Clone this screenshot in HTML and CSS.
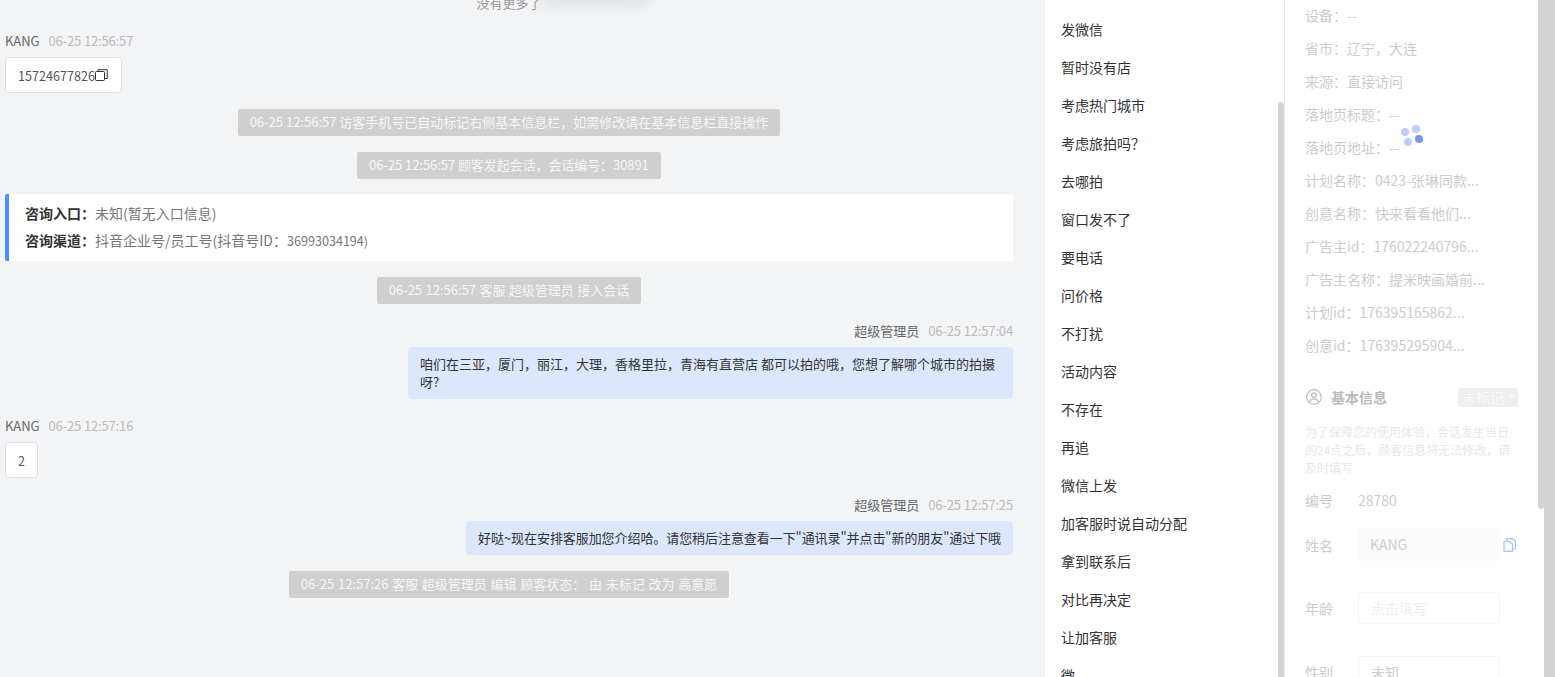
FILE: index.html
```html
<!DOCTYPE html>
<html lang="zh-CN">
<head>
<meta charset="utf-8">
<title>会话</title>
<link rel="stylesheet" href="styles.css">
</head>
<body>
<div class="app">
  <main class="chat">
    <div class="toast-shadow"></div>
    <div class="no-more">没有更多了</div>

    <div class="meta meta-first"><span class="who">KANG</span><span class="when">06-25 12:56:57</span></div>
    <div class="bubble-in">15724677826<svg class="copy" viewBox="0 0 13 13" width="13" height="13"><rect x="0.5" y="2.5" width="9" height="9" rx="1" fill="none" stroke="#333" stroke-width="1"/><path d="M3 2.5V0.7H12.2V9.5H9.5" fill="none" stroke="#333" stroke-width="1"/></svg></div>

    <div class="sys sys-a"><span>06-25 12:56:57 访客手机号已自动标记右侧基本信息栏，如需修改请在基本信息栏直接操作</span></div>
    <div class="sys sys-b"><span>06-25 12:56:57 顾客发起会话，会话编号：30891</span></div>

    <section class="entry">
      <p><b>咨询入口：</b>未知(暂无入口信息)</p>
      <p><b>咨询渠道：</b>抖音企业号/员工号(抖音号ID：<span class="num">36993034194)</span></p>
    </section>

    <div class="sys sys-c"><span>06-25 12:56:57 客服 超级管理员 接入会话</span></div>

    <div class="meta meta-right meta-d"><span class="who">超级管理员</span><span class="when">06-25 12:57:04</span></div>
    <div class="bubble-out bubble-wide">咱们在三亚，厦门，丽江，大理，香格里拉，青海有直营店 都可以拍的哦，您想了解哪个城市的拍摄呀?</div>

    <div class="meta meta-e"><span class="who">KANG</span><span class="when">06-25 12:57:16</span></div>
    <div class="bubble-in">2</div>

    <div class="meta meta-right meta-f"><span class="who">超级管理员</span><span class="when">06-25 12:57:25</span></div>
    <div class="bubble-out bubble-line">好哒~现在安排客服加您介绍哈。请您稍后注意查看一下"通讯录"并点击"新的朋友"通过下哦</div>

    <div class="sys sys-d"><span>06-25 12:57:26 客服 超级管理员 编辑 顾客状态： 由 未标记 改为 高意愿</span></div>
  </main>

  <nav class="phrases">
    <ul>
      <li>发微信</li>
      <li>暂时没有店</li>
      <li>考虑热门城市</li>
      <li>考虑旅拍吗？</li>
      <li>去哪拍</li>
      <li>窗口发不了</li>
      <li>要电话</li>
      <li>问价格</li>
      <li>不打扰</li>
      <li>活动内容</li>
      <li>不存在</li>
      <li>再追</li>
      <li>微信上发</li>
      <li>加客服时说自动分配</li>
      <li>拿到联系后</li>
      <li>对比再决定</li>
      <li>让加客服</li>
      <li>微</li>
    </ul>
    <div class="thumb thumb-list"></div>
  </nav>

  <aside class="info">
    <div class="info-body">
      <ul class="facts">
        <li>设备：<span class="dash">--</span></li>
        <li>省市：辽宁，大连</li>
        <li>来源：直接访问</li>
        <li>落地页标题：<span class="dash">--</span></li>
        <li>落地页地址：<span class="dash">--</span></li>
        <li>计划名称：0423-张琳同款...</li>
        <li>创意名称：快来看看他们...</li>
        <li>广告主id：176022240796...</li>
        <li>广告主名称：提米映画婚前...</li>
        <li>计划id：176395165862...</li>
        <li>创意id：176395295904...</li>
      </ul>
      <div class="section-head">
        <svg class="user-icon" viewBox="0 0 16 16" width="16" height="16"><circle cx="8" cy="8" r="7.3" fill="none" stroke="#bdbdbd" stroke-width="1.2"/><circle cx="8" cy="6.3" r="2.4" fill="none" stroke="#bdbdbd" stroke-width="1.2"/><path d="M3.6 13.2C4.2 11 6 10.2 8 10.2s3.8.8 4.4 3" fill="none" stroke="#bdbdbd" stroke-width="1.2"/></svg>
        <h3>基本信息</h3>
        <div class="badge">未标记<i class="caret"></i></div>
      </div>
      <p class="notice">为了保障您的使用体验，会话发生当日的24点之后，顾客信息将无法修改，请及时填写</p>
      <div class="field field-id"><label>编号</label><span class="value">28780</span></div>
      <div class="field field-name"><label>姓名</label><div class="input input-filled">KANG</div>
        <svg class="doc-icon" viewBox="0 0 13 14" width="13" height="14"><path d="M1 3.5H6.5L9.5 6V13.4H1Z" fill="#f6f9ff" stroke="#a9c4fb" stroke-width="1.2"/><path d="M4 3.2V.7H9.5L12.4 3.2V11H9.7" fill="none" stroke="#a9c4fb" stroke-width="1.2"/></svg>
      </div>
      <div class="field field-age"><label>年龄</label><div class="input input-empty">点击填写</div></div>
      <div class="field field-sex"><label>性别</label><div class="input input-value">未知</div></div>
    </div>
    <div class="thumb thumb-info"></div>
    <div class="spinner"><i class="dot d1"></i><i class="dot d2"></i><i class="dot d3"></i><i class="dot d4"></i></div>
  </aside>

  <div class="edge"></div>
</div>
</body>
</html>
```
FILE: styles.css
```css
* { box-sizing: border-box; }
html, body { margin: 0; height: 100%; overflow: hidden; }
body {
  font-family: "Noto Sans CJK SC", "Noto Sans", sans-serif;
  font-size: 13px;
  color: #333;
  background: #fff;
}
ul { list-style: none; margin: 0; padding: 0; }
p, h3 { margin: 0; }

.app { display: flex; height: 677px; overflow: hidden; }

/* chat */
.chat {
  position: relative;
  flex: 0 0 1044px;
  height: 677px;
  padding: 0 31px 0 5px;
  background: #f3f4f6;
  overflow: hidden;
}
.toast-shadow {
  position: absolute;
  left: 545px;
  top: -26px;
  width: 100px;
  height: 26px;
  border-radius: 6px;
  box-shadow: 0 2px 14px 6px rgba(0, 0, 0, .07);
}
.no-more {
  height: 18px;
  margin-top: -6px;
  line-height: 18px;
  text-align: center;
  font-size: 13px;
  color: #999;
}
.meta { display: flex; gap: 9px; height: 18px; line-height: 18px; font-size: 13px; }
.meta-right { justify-content: flex-end; }
.who { color: #666; }
.when { color: #bbb; letter-spacing: -.15px; }
.meta-first { margin-top: 20px; }
.meta-d { margin-top: 18px; }
.meta-e { margin-top: 18px; }
.meta-f { margin-top: 18px; }

.bubble-in {
  display: flex;
  align-items: center;
  width: fit-content;
  height: 36px;
  margin-top: 7px;
  padding: 0 12px;
  background: #fff;
  border: 1px solid #dcdfe6;
  border-radius: 4px;
  font-size: 12.6px;
  color: #555;
}
.copy { flex: none; margin-right: 1px; }

.sys { display: flex; justify-content: center; }
.sys span {
  height: 27px;
  padding: 0 12px;
  line-height: 26px;
  background: #cfcfcf;
  border-radius: 2px;
  font-size: 13px;
  color: #f6f6f6;
  white-space: nowrap;
}
.sys-a { margin-top: 16px; }
.sys-b { margin-top: 16px; letter-spacing: -.07px; }
.sys-c { margin-top: 16px; word-spacing: .5px; }
.sys-d { margin-top: 16px; word-spacing: .8px; }

.entry {
  height: 67px;
  margin-top: 15px;
  padding: 6px 16px 0;
  background: #fff;
  border-left: 4px solid #4e8dff;
  border-radius: 2px;
  color: #777;
  font-size: 14px;
}
.entry p { height: 27px; line-height: 27px; white-space: nowrap; }
.entry b { color: #333; font-weight: 700; }
.num { font-size: 12.6px; }

.bubble-out {
  margin-top: 7px;
  margin-left: auto;
  padding: 8px 12px;
  line-height: 18px;
  background: #dbe7fd;
  border-radius: 4px;
  font-size: 13px;
  color: #333;
}
.bubble-wide { width: 605px; height: 52px; }
.bubble-line { width: fit-content; height: 34px; white-space: nowrap; letter-spacing: -.07px; }

/* phrase list */
.phrases {
  flex: 0 0 241px;
  display: flex;
  height: 677px;
  background: #fff;
  border-left: 1px solid #eceef1;
  border-right: 1px solid #e8e8e8;
}
.phrases ul { flex: 1; padding: 10px 0 0 16px; font-size: 14px; color: #333; }
.phrases li { height: 38px; line-height: 38px; }
.thumb { flex: none; width: 6px; background: #d3d3d3; border-radius: 3px 3px 0 0; }
.thumb-list { margin-top: 102px; }

/* info panel */
.info {
  position: relative;
  flex: 0 0 259px;
  display: flex;
  height: 677px;
  background: #fff;
}
.info-body { flex: 1; padding: 0 20px; overflow: hidden; font-size: 14px; color: #ccc; }
.facts { margin-top: -1px; }
.facts li { height: 33px; line-height: 33px; white-space: nowrap; }
.dash { letter-spacing: 1px; font-size: 13px; }
.section-head { display: flex; align-items: center; height: 20px; margin-top: 25px; }
.user-icon { flex: none; margin-left: 1px; }
.section-head h3 { margin-left: 9px; font-size: 14px; font-weight: 700; color: #bbb; }
.badge {
  display: flex;
  align-items: center;
  height: 19px;
  width: 60px;
  margin-left: auto;
  padding-left: 4px;
  background: #eeeeee;
  border-radius: 2px;
  font-size: 14px;
  color: #fafafa;
}
.caret {
  margin-left: 4px;
  border: 4px solid transparent;
  border-top-color: #fafafa;
  border-bottom: 0;
}
.notice { margin-top: 16px; line-height: 18px; font-size: 12px; color: #e8e8e8; }
.field { display: flex; align-items: center; }
.field label { flex: none; width: 53px; color: #ccc; }
.value { color: #ccc; }
.field-id { height: 18px; margin-top: 14px; }
.field-name { margin-top: 20px; }
.field-age { margin-top: 31px; }
.field-sex { margin-top: 32px; }
.input { width: 142px; height: 32px; padding: 0 12px; line-height: 30px; border-radius: 2px; }
.input-filled { background: #fcfcfc; color: #ccc; }
.input-empty { border: 1px solid #f3f3f3; color: #eee; }
.input-value { border: 1px solid #f5f5f5; color: #ccc; }
.doc-icon { flex: none; margin-left: 3px; }
.thumb-info { height: 509px; border-radius: 0 0 3px 3px; }

.spinner { position: absolute; left: 116px; top: 124px; width: 22px; height: 22px; }
.dot { position: absolute; width: 8px; height: 8px; border-radius: 50%; background: #bccdf9; }
.d1 { left: -.5px; top: 3.5px; }
.d2 { left: 10.5px; top: .5px; }
.d3 { left: 3px; top: 14px; }
.d4 { left: 14px; top: 11px; background: #7595ef; }

.edge { flex: 1; background: #d3d3d3; }
```
